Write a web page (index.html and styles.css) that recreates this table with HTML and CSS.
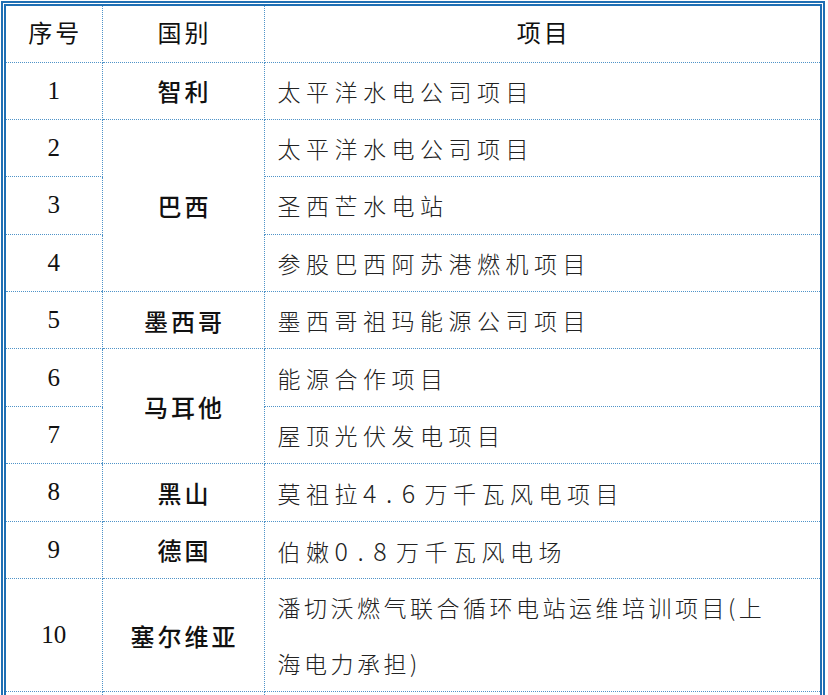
FILE: index.html
```html
<!DOCTYPE html>
<html lang="zh">
<head>
<meta charset="utf-8">
<link rel="stylesheet" href="styles.css">
</head>
<body>
<div class="frame">
  <table class="grid">
    <colgroup>
      <col class="c-no">
      <col class="c-country">
      <col class="c-proj">
    </colgroup>
    <thead>
      <tr class="head-row">
        <th class="hd">序号</th>
        <th class="hd">国别</th>
        <th class="hd">项目</th>
      </tr>
    </thead>
    <tbody>
      <tr><td class="no">1</td><td class="country">智利</td><td class="proj">太平洋水电公司项目</td></tr>
      <tr><td class="no">2</td><td class="country" rowspan="3">巴西</td><td class="proj">太平洋水电公司项目</td></tr>
      <tr><td class="no">3</td><td class="proj">圣西芒水电站</td></tr>
      <tr><td class="no">4</td><td class="proj">参股巴西阿苏港燃机项目</td></tr>
      <tr><td class="no">5</td><td class="country">墨西哥</td><td class="proj">墨西哥祖玛能源公司项目</td></tr>
      <tr><td class="no">6</td><td class="country" rowspan="2">马耳他</td><td class="proj">能源合作项目</td></tr>
      <tr><td class="no">7</td><td class="proj">屋顶光伏发电项目</td></tr>
      <tr><td class="no">8</td><td class="country">黑山</td><td class="proj">莫祖拉<span class="num">4.6</span>万千瓦风电项目</td></tr>
      <tr><td class="no">9</td><td class="country">德国</td><td class="proj">伯嫩<span class="num">0.8</span>万千瓦风电场</td></tr>
      <tr class="tall"><td class="no">10</td><td class="country">塞尔维亚</td><td class="proj proj-wrap">潘切沃燃气联合循环电站运维培训项目(上<br>海电力承担)</td></tr>
      <tr><td class="no"></td><td class="country"></td><td class="proj"></td></tr>
    </tbody>
  </table>
</div>
</body>
</html>
```

FILE: styles.css
```css
html, body {
  margin: 0;
  padding: 0;
  background: #ffffff;
}

body {
  font-family: "Noto Sans CJK SC", "Noto Sans", sans-serif;
  color: #111;
  overflow: hidden;
}

.frame {
  margin: 1px 0 0 1px;
  width: 824px;
  box-sizing: border-box;
  border: 5px double #1f6fb4;
  border-bottom: none;
}

.grid {
  width: 100%;
  border-collapse: collapse;
  table-layout: fixed;
}

.c-no { width: 96px; }
.c-country { width: 162px; }

.grid th,
.grid td {
  height: 57.4px;
  padding: 0;
  box-sizing: border-box;
  border-right: 1px dotted #4f93c8;
  border-bottom: 1px dotted #4f93c8;
  vertical-align: middle;
}

.grid .head-row th {
  height: 56px;
}

.grid th:last-child,
.grid td:last-child {
  border-right: none;
}

.grid .hd {
  font-weight: 400;
  font-size: 24px;
  letter-spacing: 3px;
  padding: 0 0 4px 3px;
  text-align: center;
  color: #111;
}

.grid .no {
  font-family: "Liberation Serif", "Times New Roman", serif;
  font-size: 25px;
  text-align: center;
  color: #111;
}

.grid .country {
  font-size: 24px;
  font-weight: 500;
  letter-spacing: 3px;
  padding-left: 3px;
  text-align: center;
  color: #111;
}

.grid .proj {
  font-size: 23px;
  font-weight: 300;
  letter-spacing: 5.5px;
  padding-left: 13px;
  text-align: left;
  color: #222;
  white-space: nowrap;
}

.grid .num {
  font-size: 25px;
  letter-spacing: 9.5px;
}

.grid .proj-wrap {
  letter-spacing: 3.5px;
  line-height: 56px;
}

.grid .tall td {
  height: 113px;
}
```
